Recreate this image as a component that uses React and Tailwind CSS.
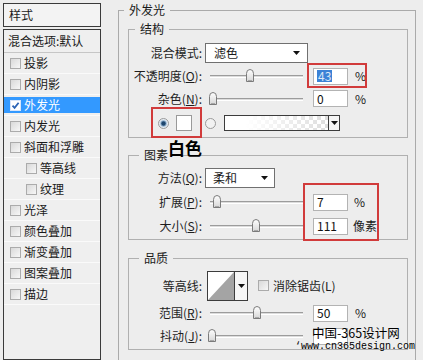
import React from "react";

const items = [
  { t: "投影" },
  { t: "内阴影" },
  { t: "外发光", sel: true },
  { t: "内发光" },
  { t: "斜面和浮雕" },
  { t: "等高线", ind: true },
  { t: "纹理", ind: true },
  { t: "光泽" },
  { t: "颜色叠加" },
  { t: "渐变叠加" },
  { t: "图案叠加" },
  { t: "描边" },
];

function Check({ checked, selected }) {
  return (
    <span
      className={
        "flex items-center justify-center w-[11px] h-[11px] border shrink-0 " +
        (selected
          ? "border-[#d8e6fb] bg-white"
          : "border-[#ababab] bg-linear-to-br from-[#d9d9d9] to-[#f7f7f7]")
      }
    >
      {checked && (
        <svg width="9" height="9" viewBox="0 0 9 9">
          <path d="M1.5 4.6 L3.6 6.8 L7.6 1.8" stroke="#2b63b5" strokeWidth="1.8" fill="none" />
        </svg>
      )}
    </span>
  );
}

function Arrow({ cls }) {
  return (
    <svg width="7" height="4" viewBox="0 0 7 4" className={cls}>
      <path d="M0 0H7L3.5 4Z" fill="#111" />
    </svg>
  );
}

function Label({ children }) {
  return <div className="w-[73px] shrink-0 text-right whitespace-nowrap text-[#1e1e1e]">{children}</div>;
}

function Slider({ pos }) {
  return (
    <div className="relative w-[93px] h-[14px] shrink-0">
      <div className="absolute left-0 right-0 top-[6px] h-[3px] border-t border-[#9c9c9c] border-b border-b-white bg-[#dcdcdc]" />
      <svg
        width="10"
        height="13"
        viewBox="0 0 10 13"
        className="absolute top-0"
        style={{ left: pos - 5 }}
      >
        <defs>
          <linearGradient id="tg" x1="0" y1="0" x2="0" y2="1">
            <stop offset="0" stopColor="#ffffff" />
            <stop offset="1" stopColor="#d6d6d6" />
          </linearGradient>
        </defs>
        <path d="M1.5 4.5 Q1.5 0.5 5 0.5 Q8.5 0.5 8.5 4.5 V12.5 H1.5 Z" fill="url(#tg)" stroke="#7b7b7b" />
        <path d="M3 11.5 H7" stroke="#a8a8a8" />
      </svg>
    </div>
  );
}

function Num({ children }) {
  return (
    <div className="w-[35px] h-[17px] shrink-0 border border-[#b3b3b3] bg-white pl-[3px] flex items-center text-[12px] text-[#111]">
      {children}
    </div>
  );
}

function Radio({ on }) {
  return (
    <svg width="11" height="11" viewBox="0 0 11 11" className="shrink-0">
      <circle cx="5.5" cy="5.5" r="5" fill={on ? "#e4ebf2" : "#f2f2f2"} stroke="#9a9a9a" />
      {on && <circle cx="5.5" cy="5.5" r="3.2" fill="#8fb0cf" />}
      {on && <circle cx="5.5" cy="5.5" r="2.2" fill="#1d466e" />}
    </svg>
  );
}

export default function App() {
  return (
    <div className="relative w-[423px] h-[360px] overflow-hidden bg-[#ededed] flex font-['Noto_Sans_CJK_SC','Noto_Sans',sans-serif] text-[12px] leading-none text-[#1a1a1a]">
      {/* left panel */}
      <div className="w-[101px] shrink-0 pl-[3px] pt-[3px] flex flex-col">
        <div className="h-[24px] border border-[#3a3a3a] bg-[#f3f3f3] flex items-center pl-[5px]">样式</div>
        <div className="mt-[2px] flex-1 border border-[#3a3a3a] bg-[#efefef]">
          <div className="h-[23px] border-b border-[#c6c6c6] flex items-center pl-[4px]">混合选项:默认</div>
          {items.map((it) => (
            <div key={it.t} className="h-[21px] py-[2px] border-b border-[#fafafa]">
              <div className={"h-full flex items-center " + (it.sel ? "bg-[#3399ff] text-white" : "")}>
                <span className={it.ind ? "ml-[22px]" : "ml-[6px]"}>
                  <Check checked={it.sel} selected={it.sel} />
                </span>
                <span className="ml-[3px]">{it.t}</span>
              </div>
            </div>
          ))}
        </div>
      </div>

      {/* main */}
      <div className="flex-1 pl-[17px] pt-[2px]">
        <fieldset className="w-[298px] border border-[#aaaaaa] pl-[9px] pt-[3px] pb-[20px] flex flex-col">
          <legend className="-ml-[4px] px-[5px] h-[16px] leading-[16px]">外发光</legend>

          {/* 结构 */}
          <fieldset className="w-[280px] border border-[#b0b0b0]">
            <legend className="ml-[6px] px-[5px] h-[16px] leading-[16px]">结构</legend>
            <div className="relative pt-[4px]">
              <div className="h-[23px] flex items-center">
                <Label>混合模式:</Label>
                <div className="ml-[3px] w-[103px] h-[20px] border border-[#707070] bg-white flex items-center">
                  <span className="pl-[8px] flex-1">滤色</span>
                  <Arrow cls="mr-[7px]" />
                </div>
              </div>
              <div className="h-[24px] flex items-center">
                <Label>
                  不透明度(<u>O</u>):
                </Label>
                <div className="ml-[8px]">
                  <Slider pos={40} />
                </div>
                <div className="ml-[10px]">
                  <Num>
                    <span className="bg-[#3b82d6] text-[#dbe8f7] px-[1px]">43</span>
                  </Num>
                </div>
                <span className="ml-[7px]">%</span>
              </div>
              <div className="h-[21px] flex items-center">
                <Label>
                  杂色(<u>N</u>):
                </Label>
                <div className="ml-[8px]">
                  <Slider pos={3} />
                </div>
                <div className="ml-[10px]">
                  <Num>0</Num>
                </div>
                <span className="ml-[7px]">%</span>
              </div>
              <div className="h-[28px] flex items-center">
                <div className="ml-[29px]">
                  <Radio on />
                </div>
                <div className="ml-[7px] w-[16px] h-[16px] border border-[#9a9a9a] bg-white shrink-0" />
                <div className="ml-[13px]">
                  <Radio />
                </div>
                <div className="ml-[8px] w-[116px] h-[16px] border border-[#3c3c3c] flex shrink-0">
                  <div className="flex-1 bg-[repeating-conic-gradient(#dedede_0%_25%,#ffffff_0%_50%)] bg-[length:8px_8px]">
                    <div className="w-full h-full bg-linear-to-r from-white from-20% to-transparent" />
                  </div>
                  <div className="w-[11px] border-l border-[#3c3c3c] bg-[#f4f4f4] flex items-center justify-center">
                    <Arrow />
                  </div>
                </div>
              </div>

              {/* annotations */}
              <div className="absolute left-[178px] top-[26px] w-[60px] h-[25px] border-2 border-[#d13b3b]" />
              <div className="absolute left-[22px] top-[70px] w-[51px] h-[31px] border-2 border-[#d13b3b]" />
              <div className="absolute left-[39px] top-[101px] text-[17px] font-bold leading-[20px] text-black">白色</div>
            </div>
          </fieldset>

          {/* 图素 */}
          <fieldset className="mt-[9px] w-[280px] border border-[#b0b0b0] pb-[2px]">
            <legend className="ml-[10px] px-[5px] h-[16px] leading-[16px]">图素</legend>
            <div className="relative pt-[4px]">
              <div className="h-[22px] flex items-center">
                <Label>
                  方法(<u>Q</u>):
                </Label>
                <div className="ml-[3px] w-[70px] h-[20px] border border-[#707070] bg-white flex items-center">
                  <span className="pl-[7px] flex-1">柔和</span>
                  <Arrow cls="mr-[6px]" />
                </div>
              </div>
              <div className="h-[26px] flex items-center">
                <Label>
                  扩展(<u>P</u>):
                </Label>
                <div className="ml-[8px]">
                  <Slider pos={7} />
                </div>
                <div className="ml-[10px]">
                  <Num>7</Num>
                </div>
                <span className="ml-[6px]">%</span>
              </div>
              <div className="h-[22px] flex items-center">
                <Label>
                  大小(<u>S</u>):
                </Label>
                <div className="ml-[8px]">
                  <Slider pos={46} />
                </div>
                <div className="ml-[10px]">
                  <Num>111</Num>
                </div>
                <span className="ml-[5px]">像素</span>
              </div>
              <div className="absolute left-[174px] top-[20px] w-[76px] h-[58px] border-2 border-[#d13b3b]" />
            </div>
          </fieldset>

          {/* 品质 */}
          <fieldset className="mt-[10px] w-[280px] border border-[#b0b0b0] pb-[2px]">
            <legend className="ml-[10px] px-[5px] h-[16px] leading-[16px]">品质</legend>
            <div className="relative pt-[4px]">
              <div className="h-[31px] flex items-center">
                <Label>等高线:</Label>
                <div className="ml-[5px] w-[41px] h-[30px] border border-[#3c3c3c] flex shrink-0">
                  <div className="w-[26px] h-full bg-white">
                    <svg width="26" height="28" viewBox="0 0 26 28">
                      <path d="M0 28 L26 0 L26 28 Z" fill="#a4a4a4" />
                    </svg>
                  </div>
                  <div className="flex-1 border-l border-[#3c3c3c] bg-[#f6f6f6] flex items-center justify-center">
                    <Arrow />
                  </div>
                </div>
                <div className="ml-[10px]">
                  <Check />
                </div>
                <span className="ml-[4px] whitespace-nowrap">消除锯齿(L)</span>
              </div>
              <div className="h-[24px] flex items-center">
                <Label>
                  范围(<u>R</u>):
                </Label>
                <div className="ml-[8px]">
                  <Slider pos={47} />
                </div>
                <div className="ml-[10px]">
                  <Num>50</Num>
                </div>
                <span className="ml-[7px]">%</span>
              </div>
              <div className="h-[22px] flex items-center">
                <Label>
                  抖动(<u>J</u>):
                </Label>
                <div className="ml-[8px]">
                  <Slider pos={2} />
                </div>
                <div className="ml-[10px]">
                  <Num></Num>
                </div>
              </div>
            </div>
          </fieldset>
        </fieldset>
      </div>

      {/* watermark */}
      <div className="absolute left-[312px] top-[326px] text-[12.5px] leading-[14px] text-black">
        中国-365设计网
      </div>
      <div className="absolute left-[295px] top-[341px] font-['Liberation_Mono',monospace] text-[10px] leading-[11px] text-black whitespace-nowrap">
        ‘www.cn365design.com
      </div>
    </div>
  );
}
